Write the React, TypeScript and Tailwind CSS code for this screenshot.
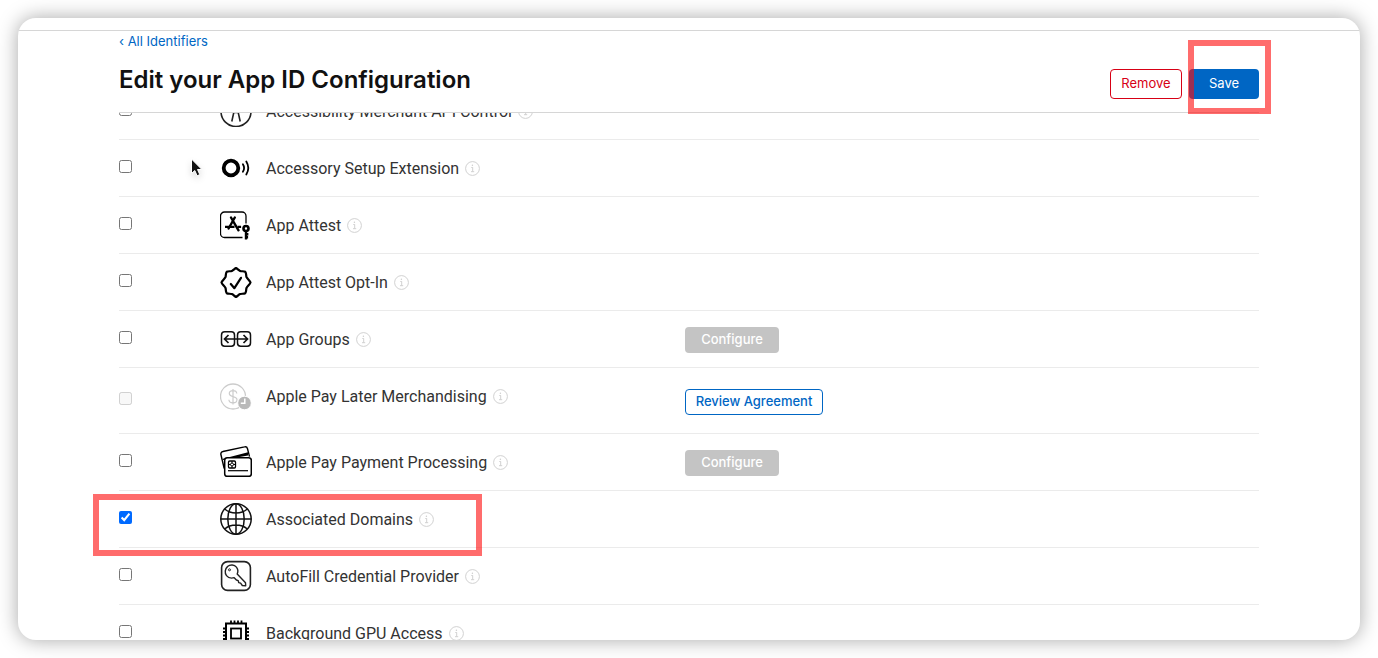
import React, { useState } from "react";

interface ICapability {
  id: string;
  name: string;
  icon: React.ReactNode;
  disabled?: boolean;
  action?: "configure" | "agreement";
  highlighted?: boolean;
}

const AccessibilityIcon = () => (
  <svg width="32" height="32" viewBox="0 -0.5 32 32" fill="none" stroke="#222" strokeWidth="1.6">
    <circle cx="16" cy="16" r="15" />
    <circle cx="16" cy="7.5" r="1.6" />
    <path d="M8 11.500l6 1.400v3.100l-2.200 10M24 11.500l-6 1.400v3.100l2.200 10M14 17h4" />
  </svg>
);

const AccessoryIcon = () => (
  <svg width="32" height="32" viewBox="0 0 32 32" fill="none" stroke="#000">
    <circle cx="11" cy="16" r="7.300" strokeWidth="3.800" />
    <path d="M22.900 12.200q2.400 3.800 0 7.600M26.300 9.500q4 6.500 0 13" strokeWidth="1.800" strokeLinecap="round" />
  </svg>
);

const AppAttestIcon = () => (
  <svg width="32" height="32" viewBox="0 -0.5 32 32" fill="none" stroke="#000">
    <path d="M26 14V6.500a4 4 0 0 0-4-4H4.500a4 4 0 0 0-4 4V24a4 4 0 0 0 4 4H22.500" strokeWidth="1.300" />
    <path d="M14.800 8l-6.200 11M11 8l7.500 12.800" strokeWidth="2.400" strokeLinecap="round" />
    <path d="M5 17.300h9.500M17.600 17.300h3.500" strokeWidth="2.300" />
    <circle cx="26" cy="19" r="2.500" strokeWidth="2.600" />
    <path d="M26 21.500v8.500M26 24.800h2.400M26 27.800h2.100" strokeWidth="2.400" />
  </svg>
);

const OptInIcon = () => (
  <svg width="32" height="32" viewBox="0 -0.5 32 32" fill="none" stroke="#000" strokeLinecap="round" strokeLinejoin="round">
    <path
      d="M16 1.500c1.500.8 2.600 2.300 4.100 2.900s3.600.1 5.200.9c1.200 1.600.6 3.600 1.200 5.200.7 1.600 3.200 3.200 4 5.500-.8 2.300-3.300 3.900-4 5.500-.6 1.600 0 3.600-1.200 5.200-1.600.8-3.700.3-5.200.9s-2.600 2.100-4.100 2.900c-1.500-.8-2.600-2.300-4.100-2.900s-3.600-.1-5.200-.9c-1.200-1.600-.6-3.600-1.200-5.200-.7-1.600-3.200-3.200-4-5.500.8-2.300 3.300-3.900 4-5.500.6-1.600 0-3.600 1.200-5.200 1.600-.8 3.700-.3 5.200-.9s2.600-2.100 4.100-2.900z"
      strokeWidth="2.200"
    />
    <path d="M10.800 17.500l3.600 4.200 6.600-10.400" strokeWidth="2.200" />
  </svg>
);

const AppGroupsIcon = () => (
  <svg width="32" height="32" viewBox="0 0 32 32" fill="none" stroke="#111">
    <rect x="1.500" y="8.700" width="13" height="14.600" rx="3.200" strokeWidth="1.500" />
    <rect x="17.500" y="8.700" width="13" height="14.600" rx="3.200" strokeWidth="1.500" />
    <path d="M5 16h22M8.500 12l-4 4 4 4M23.500 12l4 4-4 4" strokeWidth="1.700" />
  </svg>
);

const PayLaterIcon = () => (
  <svg width="32" height="32" viewBox="0 -1 32 32" fill="none" stroke="#ccc">
    <circle cx="13" cy="15.500" r="12.500" strokeWidth="1.300" />
    <path
      d="M16.800 12.500c-.2-2-1.700-2.900-3.800-2.900s-3.700 1-3.700 2.900 1.600 2.600 3.700 3.100 4 1.200 4 3.200-1.700 3.100-4 3.100-4-1.100-4.100-3.100M13 8v15.500"
      strokeWidth="1.200"
    />
    <circle cx="24.500" cy="22" r="6.800" fill="#b9b9b9" stroke="#fff" />
    <path d="M24.800 17.500v4.800h-4" stroke="#fff" strokeWidth="1.500" />
  </svg>
);

const PaymentIcon = () => (
  <svg width="32" height="32" viewBox="0 0 32 32" fill="none" stroke="#000" strokeLinejoin="round">
    <path d="M4.200 22.500L.9 8.500a2.500 2.500 0 0 1 2-3L24.500.900a2.500 2.500 0 0 1 3 1.800l2 8" strokeWidth="1.400" />
    <path d="M3 12.800L28 6.300v3.200l-14 2.500-11 2z" fill="#000" stroke="none" />
    <rect x="4.700" y="11.700" width="26.600" height="18.600" rx="2.600" fill="#fff" strokeWidth="1.500" />
    <rect x="8.500" y="15" width="7" height="7" rx="1.200" strokeWidth="1.300" />
    <circle cx="12" cy="18.500" r="1.500" strokeWidth="1" />
    <path d="M12 15v2M12 20v2M8.500 18.500h2M13.500 18.500h2" strokeWidth="1" />
    <path d="M8 24.700h20" strokeWidth="1.200" />
  </svg>
);

const GlobeIcon = () => (
  <svg width="32" height="32" viewBox="0 0 32 32" fill="none" stroke="#111" strokeWidth="1.500">
    <circle cx="16" cy="16" r="15.200" />
    <ellipse cx="16" cy="16" rx="8.200" ry="15.200" />
    <path d="M16 .7v30.600M.7 16h30.600M4.700 6c3 2.700 6.800 4 11.300 4s8.300-1.300 11.300-4M4.700 26c3-2.700 6.800-4 11.300-4s8.300 1.300 11.300 4" />
  </svg>
);

const AutoFillIcon = () => (
  <svg width="32" height="32" viewBox="0 0 32 32" fill="none" stroke="#222" strokeLinejoin="round">
    <rect x="1.600" y="1.600" width="28.800" height="28.800" rx="6" strokeWidth="1.600" />
    <path
      d="M7.500 6.600c2.700-2.400 6.900-2 8.900.5 1.800 2.200 1.800 4.600.8 6.900l8.300 8.800.2 3-3.400-.3-1.700-2.300-1.900-.6-.5-2-1.800-.6-2.200-2.300c-2.900.9-5.700.4-7.700-2.100-2.100-2.700-1.500-6.800 1-9z"
      strokeWidth="1.400"
    />
    <circle cx="9.500" cy="9.800" r="1" strokeWidth="1" />
  </svg>
);

const GpuIcon = () => (
  <svg width="32" height="32" viewBox="0 -0.5 32 32" fill="none" stroke="#000">
    <rect x="6" y="6" width="20" height="20" strokeWidth="2" />
    <rect x="11" y="11" width="10" height="10" strokeWidth="1.800" />
    <path
      d="M11 3v3M14.500 3v3M18 3v3M21.500 3v3M11 26v3M14.500 26v3M18 26v3M21.500 26v3M3 11h3M3 14.500h3M3 18h3M3 21.500h3M26 11h3M26 14.500h3M26 18h3M26 21.500h3"
      strokeWidth="1.800"
    />
  </svg>
);

const InfoIcon = () => (
  <svg width="15" height="15" viewBox="0 0 15 15" fill="none" stroke="#ccc">
    <circle cx="7.500" cy="7.500" r="6.900" strokeWidth="0.900" />
    <path d="M6.300 6.500h1.400v4M6 10.700h3.200" strokeWidth="0.900" />
    <circle cx="7.400" cy="4.300" r="0.700" fill="#ccc" stroke="none" />
  </svg>
);

const Cursor = () => (
  <svg
    className="absolute left-[71px] top-[18px] drop-shadow-md"
    width="14"
    height="20"
    viewBox="0 0 14 20"
  >
    <path d="M1.500 1v14.500l3.300-3 2.300 5.300 2.700-1.200-2.300-5.100h4.400z" fill="#111" stroke="#fff" strokeWidth="1" />
  </svg>
);

const capabilities: ICapability[] = [
  { id: "accessibility", name: "Accessibility Merchant API Control", icon: <AccessibilityIcon /> },
  { id: "accessory", name: "Accessory Setup Extension", icon: <AccessoryIcon /> },
  { id: "attest", name: "App Attest", icon: <AppAttestIcon /> },
  { id: "attest-opt-in", name: "App Attest Opt-In", icon: <OptInIcon /> },
  { id: "groups", name: "App Groups", icon: <AppGroupsIcon />, action: "configure" },
  {
    id: "pay-later",
    name: "Apple Pay Later Merchandising",
    icon: <PayLaterIcon />,
    disabled: true,
    action: "agreement",
  },
  { id: "payment", name: "Apple Pay Payment Processing", icon: <PaymentIcon />, action: "configure" },
  { id: "domains", name: "Associated Domains", icon: <GlobeIcon />, highlighted: true },
  { id: "autofill", name: "AutoFill Credential Provider", icon: <AutoFillIcon /> },
  { id: "gpu", name: "Background GPU Access", icon: <GpuIcon /> },
];

interface IRowProps {
  capability: ICapability;
  checked: boolean;
  onToggle: () => void;
}

const CapabilityRow = ({ capability, checked, onToggle }: IRowProps) => {
  const { id, name, icon, disabled, action, highlighted } = capability;

  return (
    <tr className={action === "agreement" ? "h-[66px]" : "h-[57px]"}>
      <td className="relative w-[101px] border-b border-[#ebebeb] pb-1 align-middle">
        <input
          id={id}
          type="checkbox"
          className="block size-[13px] accent-[#006aff]"
          checked={checked}
          disabled={disabled}
          onChange={onToggle}
        />
        {id === "accessory" && <Cursor />}
        {highlighted && (
          <div className="pointer-events-none absolute -left-[26px] top-[3px] z-10 h-[62px] w-[389px] border-6 border-[#ff0a0a]/60" />
        )}
      </td>
      <td className="w-[465px] border-b border-[#ebebeb] py-3 align-top">
        <div className="flex items-center">
          {icon}
          <label htmlFor={id} className="ml-3.5 pt-0.5 font-['Roboto',sans-serif] text-base text-[#333]">
            {name}
          </label>
          <button type="button" aria-label={`About ${name}`} className="ml-1.5">
            <InfoIcon />
          </button>
        </div>
      </td>
      <td className="border-b border-[#ebebeb] pt-0.5 align-middle">
        {action === "configure" && (
          <button
            type="button"
            disabled
            className="block h-[26px] w-[94px] rounded bg-[#c4c4c4] text-[13px] font-medium text-white"
          >
            Configure
          </button>
        )}
        {action === "agreement" && (
          <button
            type="button"
            className="block h-[26px] w-[138px] rounded border border-[#0066c4] text-[13px] font-medium text-[#0066c4]"
          >
            Review Agreement
          </button>
        )}
      </td>
    </tr>
  );
};

const App = () => {
  const [selected, setSelected] = useState<string[]>(["domains"]);

  const toggle = (id: string) => {
    setSelected((prev) =>
      prev.includes(id) ? prev.filter((s) => s !== id) : [...prev, id]
    );
  };

  return (
    <div className="h-screen bg-white p-[18px] font-['Inter',sans-serif]">
      <div className="flex h-full flex-col overflow-hidden rounded-[18px] bg-white shadow-[0_0_20px_rgba(0,0,0,0.35)]">
        <div className="h-3 shrink-0" />
        <header className="shrink-0 border-t border-[#d6d6d6]">
          <div className="mx-auto max-w-[1140px] border-b border-[#d6d6d6]">
            <div className="flex h-[81px] items-start justify-between">
              <div>
                <a href="#identifiers" className="block text-[13px] leading-5 text-[#0066c4]">
                  ‹ All Identifiers
                </a>
                <h1 className="mt-3 text-2xl leading-[34px] font-semibold text-[#111]">
                  Edit your App ID Configuration
                </h1>
              </div>
              <div className="mt-[38px] flex gap-[7px]">
                <button
                  type="button"
                  className="h-[30px] w-[72px] rounded border border-[#d70015] text-[13px] text-[#d70015]"
                >
                  Remove
                </button>
                <div className="relative">
                  <button
                    type="button"
                    className="block h-[30px] w-[70px] rounded bg-[#0066c4] text-[13px] text-white"
                  >
                    Save
                  </button>
                  <div className="pointer-events-none absolute -left-[1px] -top-[29px] z-10 h-[74px] w-[83px] border-6 border-[#ff0a0a]/60" />
                </div>
              </div>
            </div>
          </div>
        </header>
        <main className="min-h-0 flex-1 overflow-hidden">
          <div className="mx-auto -mt-[30px] max-w-[1140px]">
            <table className="w-full table-fixed border-separate border-spacing-0">
              <tbody>
                {capabilities.map((c) => (
                  <CapabilityRow
                    key={c.id}
                    capability={c}
                    checked={selected.includes(c.id)}
                    onToggle={() => toggle(c.id)}
                  />
                ))}
              </tbody>
            </table>
          </div>
        </main>
      </div>
    </div>
  );
};

export default App;
